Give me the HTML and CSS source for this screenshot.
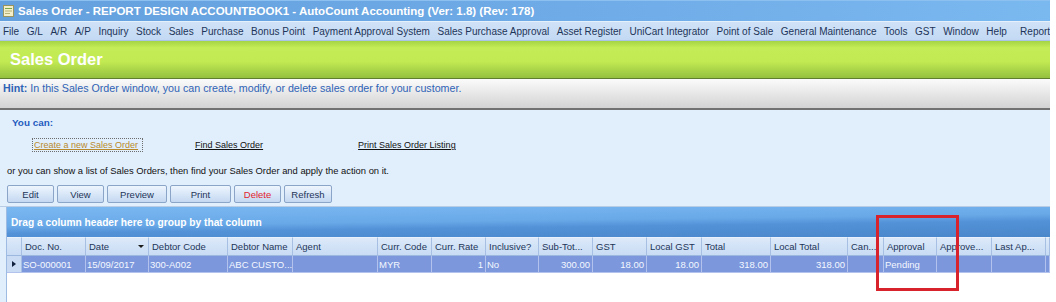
FILE: index.html
```html
<!DOCTYPE html>
<html lang="en">

<head>
    <meta charset="UTF-8">
    <title>Sales Order - AutoCount Accounting</title>
    <link rel="stylesheet" href="styles.css">
</head>

<body>
    <div class="window">
        <div class="titlebar">
            <svg class="app-icon" width="11" height="12" viewBox="0 0 11 12">
                <rect x="0.5" y="0.5" width="10" height="11" fill="#f4efc8" stroke="#9a9460"/>
                <rect x="2" y="3" width="7" height="1" fill="#7aa84a"/>
                <rect x="2" y="5.5" width="7" height="1" fill="#b8b27a"/>
                <rect x="2" y="8" width="5" height="1" fill="#b8b27a"/>
            </svg>
            <span>Sales Order - REPORT DESIGN ACCOUNTBOOK1 - AutoCount Accounting (Ver: 1.8) (Rev: 178)</span>
        </div>

        <div class="menubar">
            <span>File</span>
            <span>G/L</span>
            <span>A/R</span>
            <span>A/P</span>
            <span>Inquiry</span>
            <span>Stock</span>
            <span>Sales</span>
            <span>Purchase</span>
            <span>Bonus Point</span>
            <span>Payment Approval System</span>
            <span>Sales Purchase Approval</span>
            <span>Asset Register</span>
            <span>UniCart Integrator</span>
            <span>Point of Sale</span>
            <span>General Maintenance</span>
            <span>Tools</span>
            <span>GST</span>
            <span>Window</span>
            <span>Help</span>
            <i class="menu-sep"></i>
            <span>Report</span>
        </div>

        <div class="banner">Sales Order</div>

        <div class="hint"><b>Hint:</b> In this Sales Order window, you can create, modify, or delete sales order for your customer.</div>

        <div class="content">
            <div class="you-can">You can:</div>
            <div class="links">
                <a class="link focused">Create a new Sales Order</a>
                <a class="link find">Find Sales Order</a>
                <a class="link">Print Sales Order Listing</a>
            </div>
            <p class="or-text">or you can show a list of Sales Orders, then find your Sales Order and apply the action on it.</p>
            <div class="toolbar">
                <button class="btn w-edit">Edit</button>
                <button class="btn w-view">View</button>
                <button class="btn w-preview">Preview</button>
                <button class="btn w-print">Print</button>
                <button class="btn w-delete delete">Delete</button>
                <button class="btn w-refresh">Refresh</button>
            </div>
        </div>

        <div class="grid-panel">
            <div class="group-bar">Drag a column header here to group by that column</div>
            <div class="grid">
                <div class="hd ind"></div>
                <div class="hd">Doc. No.</div>
                <div class="hd sorted">Date <i class="sort-arrow"></i></div>
                <div class="hd">Debtor Code</div>
                <div class="hd">Debtor Name</div>
                <div class="hd">Agent</div>
                <div class="hd">Curr. Code</div>
                <div class="hd">Curr. Rate</div>
                <div class="hd">Inclusive?</div>
                <div class="hd">Sub-Tot...</div>
                <div class="hd">GST</div>
                <div class="hd">Local GST</div>
                <div class="hd">Total</div>
                <div class="hd">Local Total</div>
                <div class="hd">Can...</div>
                <div class="hd">Approval</div>
                <div class="hd">Approve...</div>
                <div class="hd">Last Ap...</div>
                <div class="hd"></div>

                <div class="cell ind"><i class="row-arrow"></i></div>
                <div class="cell">SO-000001</div>
                <div class="cell">15/09/2017</div>
                <div class="cell">300-A002</div>
                <div class="cell">ABC CUSTO...</div>
                <div class="cell"></div>
                <div class="cell">MYR</div>
                <div class="cell num">1</div>
                <div class="cell">No</div>
                <div class="cell num">300.00</div>
                <div class="cell num">18.00</div>
                <div class="cell num">18.00</div>
                <div class="cell num">318.00</div>
                <div class="cell num">318.00</div>
                <div class="cell"></div>
                <div class="cell">Pending</div>
                <div class="cell"></div>
                <div class="cell"></div>
                <div class="cell"></div>
            </div>
        </div>

        <!-- annotation drawn over the screenshot -->
        <div class="highlight"></div>
    </div>
</body>

</html>
```

FILE: styles.css
```css
body {
    margin: 0;
    padding: 0;
    background-color: #fff;
    font-family: 'Liberation Sans', Arial, sans-serif;
}

.window {
    position: relative;
    width: 1050px;
    height: 302px;
    overflow: hidden;
    background-color: #e1effd;
}

.titlebar {
    height: 21px;
    display: flex;
    align-items: center;
    padding-left: 3px;
    background: linear-gradient(to right, #64a0dd, #6eaae6 50%, #7ab8f0);
    border-top: 1px solid #8cc0f0;
    box-sizing: border-box;
    color: #fff;
    font-weight: bold;
    font-size: 11.5px;
}

.app-icon {
    margin-right: 4px;
}

.menubar {
    height: 20px;
    display: flex;
    align-items: center;
    gap: 7.6px;
    padding-left: 3px;
    background: linear-gradient(#cfe2f7, #c3d9f3);
    border-top: 1px solid #e6f0fb;
    border-bottom: 1px solid #a9c4e6;
    box-sizing: border-box;
    color: #1d3558;
    font-size: 10px;
    white-space: nowrap;
}

.menu-sep {
    width: 1px;
    height: 14px;
    background-color: #8ea9cd;
    margin: 0 -1px;
}

.banner {
    height: 37px;
    display: flex;
    align-items: center;
    padding-left: 10px;
    background: linear-gradient(#a4d444 0, #c4ec56 18%, #c2ea52 55%, #94c13f 100%);
    border-bottom: 1px solid #5f7f2e;
    color: #fff;
    font-weight: bold;
    font-size: 16.5px;
}

.hint {
    height: 31px;
    padding: 3px 0 0 3px;
    box-sizing: border-box;
    background: linear-gradient(#fbfbfb, #d3d3d3);
    border-bottom: 2px solid #727272;
    color: #2f63b6;
    font-size: 10.7px;
    line-height: 12px;
}

.content {
    height: 97px;
    padding: 6px 0 0 0;
    box-sizing: border-box;
    border-bottom: 1px solid #b8cde5;
    font-size: 9px;
}

.you-can {
    padding-left: 12px;
    line-height: 14px;
    color: #1f5bbd;
    font-weight: bold;
    font-size: 9.9px;
}

.links {
    display: flex;
    margin-top: 8px;
    padding-left: 32px;
    height: 14px;
}

.link {
    color: #111;
    text-decoration: underline;
    line-height: 12px;
    padding: 0 1px;
    border: 1px solid transparent;
    margin-right: 50px;
}

.link.focused {
    color: #b88a2c;
    border: 1px dotted #6d6d6d;
    padding: 0 4px 0 1px;
}

.link.find {
    margin-right: 91px;
}

.or-text {
    margin: 12px 0 0 7px;
    line-height: 14px;
    color: #111;
    font-size: 9.4px;
}

.toolbar {
    display: flex;
    gap: 3px;
    margin-top: 7px;
    padding-left: 7px;
}

.btn {
    height: 18px;
    padding: 0;
    border: 1px solid #8aa5c8;
    border-radius: 2px;
    background: linear-gradient(#eef5fd, #d9e7f8 50%, #c4d8f1);
    color: #1d3558;
    font-family: 'Liberation Sans', Arial, sans-serif;
    font-size: 9.5px;
}

.btn.delete {
    color: #e2222c;
}

.w-edit { width: 47px; }
.w-view { width: 47px; }
.w-preview { width: 60px; }
.w-print { width: 61px; }
.w-delete { width: 47px; }
.w-refresh { width: 48px; }

.grid-panel {
    margin-left: 6px;
    height: 95px;
    border-left: 1px solid #9dbbe3;
    background-color: #fff;
}

.group-bar {
    height: 30px;
    display: flex;
    align-items: center;
    padding-left: 4px;
    background: linear-gradient(179.3deg, #7ab8f1 0%, #69a9e8 46%, #5392d7 62%, #4a86ca 100%);
    color: #fff;
    font-weight: bold;
    font-size: 10.2px;
}

.grid {
    display: grid;
    grid-template-columns: 15px 64px 63px 79px 65px 85px 54px 54px 53px 54px 54px 55px 69px 77px 36px 53px 55px 54px 1fr;
    grid-template-rows: 19px 17px;
    font-size: 9.5px;
}

.hd {
    display: flex;
    align-items: center;
    padding-left: 3px;
    background: linear-gradient(#dce9f9, #c8dcf4);
    border-right: 1px solid #a6bfe2;
    border-bottom: 1px solid #9db8de;
    border-top: 1px solid #e9f2fc;
    color: #1d3558;
    white-space: nowrap;
    overflow: hidden;
}

.hd.ind {
    padding: 0;
}

.hd.sorted {
    justify-content: space-between;
    padding-right: 4px;
}

.sort-arrow {
    width: 0;
    height: 0;
    border-left: 3px solid transparent;
    border-right: 3px solid transparent;
    border-top: 3px solid #1b1b1b;
}

.cell {
    display: flex;
    align-items: center;
    padding: 0 2px 0 1px;
    background-color: #7c97dc;
    border-right: 1px solid #b2c2ec;
    border-bottom: 1px solid #b2c2ec;
    color: #f4f7ff;
    white-space: nowrap;
    overflow: hidden;
}

.cell.num {
    justify-content: flex-end;
}

.cell.ind {
    justify-content: center;
    background: #cadcf3;
    border-right-color: #a6bfe2;
}

.row-arrow {
    width: 0;
    height: 0;
    border-top: 3px solid transparent;
    border-bottom: 3px solid transparent;
    border-left: 4px solid #10213f;
}

.highlight {
    position: absolute;
    left: 876px;
    top: 215px;
    width: 83px;
    height: 76px;
    box-sizing: border-box;
    border: 3px solid #d8232c;
}
```
